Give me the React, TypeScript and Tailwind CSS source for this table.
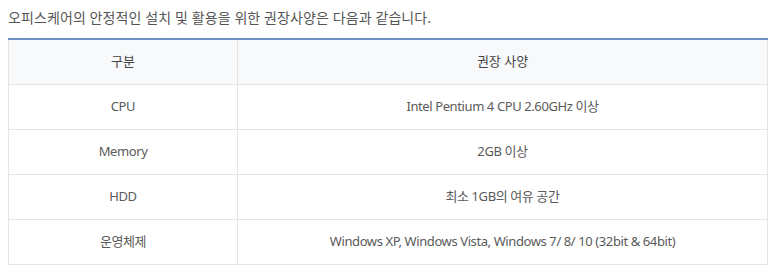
import React from "react";

const rows: [string, string][] = [
  ["CPU", "Intel Pentium 4 CPU 2.60GHz 이상"],
  ["Memory", "2GB 이상"],
  ["HDD", "최소 1GB의 여유 공간"],
  ["운영체제", "Windows XP, Windows Vista, Windows 7/ 8/ 10 (32bit & 64bit)"],
];

export default function App() {
  return (
    <div
      className="w-[778px] h-[280px] bg-white px-[8px] pt-[7px] text-[#555]"
      style={{ fontFamily: "'Noto Sans', 'Noto Sans CJK KR', sans-serif" }}
    >
      <p className="h-[25px] text-[14px] leading-[22px] tracking-[0.1px] text-[#555]">
        오피스케어의 안정적인 설치 및 활용을 위한 권장사양은 다음과 같습니다.
      </p>
      <div className="mt-[6px] w-[760px] border-t-2 border-[#6f8fc1]">
        <div className="grid grid-cols-[229px_1fr] border-l border-r border-b border-[#e5e5e5] bg-[#f8f9fb] h-[45px]">
          <div className="flex items-center justify-center border-r border-[#e5e5e5] text-[13px] text-[#444]">구분</div>
          <div className="flex items-center justify-center text-[13px] text-[#444]">권장 사양</div>
        </div>
        {rows.map(([k, v]) => (
          <div
            key={k}
            className="grid grid-cols-[229px_1fr] border-l border-r border-b border-[#e5e5e5] h-[45px]"
          >
            <div className="flex items-center justify-center border-r border-[#e5e5e5] text-[13px] tracking-[-0.4px] text-[#5a5a5a]">{k}</div>
            <div className="flex items-center justify-center text-[13px] tracking-[-0.4px] text-[#5a5a5a]">{v}</div>
          </div>
        ))}
      </div>
    </div>
  );
}
